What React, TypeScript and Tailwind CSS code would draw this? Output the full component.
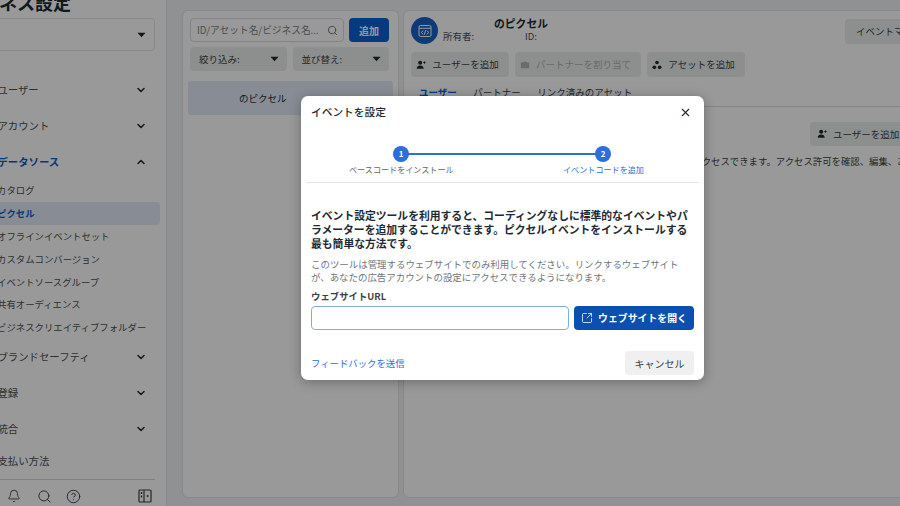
import React from "react";
import { ChevronDown, ChevronUp, Bell, Search, CircleHelp, X, SquareArrowOutUpRight } from "lucide-react";

const font = { fontFamily: '"Noto Sans CJK JP", "Liberation Sans", sans-serif' };

function UserPlus({ className = "" }: { className?: string }) {
  return (
    <svg viewBox="0 0 12 12" className={className} fill="currentColor">
      <circle cx="5" cy="3.2" r="2.4" />
      <path d="M0.8 10.5c0-2.6 1.8-4 4.2-4s4.2 1.4 4.2 4z" />
      <rect x="8.6" y="2.6" width="3" height="1" />
      <rect x="9.6" y="1.6" width="1" height="3" />
    </svg>
  );
}

function Assets({ className = "" }: { className?: string }) {
  return (
    <svg viewBox="0 0 12 12" className={className} fill="currentColor">
      <circle cx="6" cy="3" r="2.2" />
      <circle cx="2.8" cy="8.8" r="2.2" />
      <circle cx="9.2" cy="8.8" r="2.2" />
    </svg>
  );
}

function Brief({ className = "" }: { className?: string }) {
  return (
    <svg viewBox="0 0 12 12" className={className} fill="currentColor">
      <path d="M4 3V2h4v1h3v7H1V3z" />
    </svg>
  );
}

function Caret() {
  return (
    <svg viewBox="0 0 10 6" className="w-[9px] h-[6px] text-[#1c2b33]" fill="currentColor">
      <path d="M0.5 0.5h9L5 5.5z" />
    </svg>
  );
}

function NavRow({ label, open, active }: { label: string; open?: boolean; active?: boolean }) {
  const Icon = open ? ChevronUp : ChevronDown;
  return (
    <div className="h-[36px] -ml-[0.6px] flex items-center justify-between pr-[19px]">
      <span className={active ? "text-[10.4px] font-bold text-[#0a5cd0]" : "text-[10.4px] text-[#4a4f54]"}>{label}</span>
      <Icon className="w-[12px] h-[12px] text-[#1c2b33]" strokeWidth={3} />
    </div>
  );
}

function SubRow({ label, active }: { label: string; active?: boolean }) {
  return (
    <div
      className={
        active
          ? "h-[22.8px] -ml-[1px] flex items-center rounded-r-[4px] mr-[6px] bg-[#e3ecf9] text-[9.4px] font-bold text-[#0a5cd0]"
          : "h-[22.8px] -ml-[1px] flex items-center mr-[6px] text-[9.4px] text-[#4a4f54]"
      }
    >
      {label}
    </div>
  );
}

function Sidebar() {
  return (
    <aside className="w-[167px] shrink-0 h-full bg-white border-r border-[#dfe0e1] overflow-hidden flex flex-col">
      <div className="-mt-[8px] -ml-[37px] text-[18px] leading-[20px] font-bold text-[#1c2b33] whitespace-nowrap">ビジネス設定</div>
      <div className="-ml-[10px] mr-[11px] mt-[6px] h-[33px] border border-[#e4e5e6] rounded-[4px] flex items-center justify-end pr-[8px]">
        <Caret />
      </div>
      <div className="-ml-[2px] mt-[21px] flex-1 flex flex-col">
        <NavRow label="ユーザー" />
        <NavRow label="アカウント" />
        <NavRow label="データソース" open active />
        <div className="-mt-[1px]">
          <SubRow label="カタログ" />
          <SubRow label="ピクセル" active />
          <SubRow label="オフラインイベントセット" />
          <SubRow label="カスタムコンバージョン" />
          <SubRow label="イベントソースグループ" />
          <SubRow label="共有オーディエンス" />
          <SubRow label="ビジネスクリエイティブフォルダー" />
        </div>
        <NavRow label="ブランドセーフティ" />
        <NavRow label="登録" />
        <NavRow label="統合" />
        <div className="h-[28px] -ml-[0.6px] flex items-center text-[10.4px] text-[#4a4f54]">支払い方法</div>
      </div>
      <div className="mr-[11px] h-[27px] border-t border-[#d5d6d7] flex items-center pt-[6px] pl-[7px] pr-[3px] text-[#3a3f44]">
        <Bell className="w-[14px] h-[14px]" strokeWidth={1.5} />
        <Search className="w-[15px] h-[15px] ml-[16px]" strokeWidth={1.5} />
        <CircleHelp className="w-[15px] h-[15px] ml-[14px]" strokeWidth={1.5} />
        <svg viewBox="0 0 14 14" className="w-[14px] h-[14px] ml-auto" fill="none" stroke="currentColor" strokeWidth="1.2">
          <rect x="1" y="1" width="12" height="12" rx="1" />
          <path d="M6 1v12" />
          <rect x="2.8" y="3" width="1.4" height="2" fill="currentColor" stroke="none" />
          <rect x="2.8" y="6.5" width="1.4" height="2" fill="currentColor" stroke="none" />
          <circle cx="9.6" cy="7" r="1" fill="currentColor" stroke="none" />
        </svg>
      </div>
    </aside>
  );
}

function ListPanel() {
  return (
    <section className="w-[217px] shrink-0 bg-white rounded-[6px] border border-[#e2e3e4] px-[7px] pt-[7px]">
      <div className="flex gap-[5px] pr-[2px]">
        <div className="w-[154px] h-[24px] border border-[#dadde1] rounded-[4px] flex items-center justify-between pl-[6px] pr-[5px] text-[9.7px] text-[#7a7f85] overflow-hidden whitespace-nowrap">
          <span>ID/アセット名/ビジネス名...</span>
          <Search className="w-[11px] h-[11px] shrink-0 text-[#6a6f75]" strokeWidth={2} />
        </div>
        <div className="w-[40px] h-[24px] rounded-[4px] bg-[#0b5fd0] text-white text-[10px] font-bold flex items-center justify-center">追加</div>
      </div>
      <div className="flex gap-[6px] mt-[5px] pr-[2px]">
        <div className="w-[97px] h-[24px] rounded-[4px] bg-[#eceded] flex items-center justify-between pl-[9px] pr-[8px] text-[9.5px] text-[#3a3f44]">
          <span>絞り込み:</span>
          <Caret />
        </div>
        <div className="w-[97px] h-[24px] rounded-[4px] bg-[#eceded] flex items-center justify-between pl-[9px] pr-[8px] text-[9.5px] text-[#3a3f44]">
          <span>並び替え:</span>
          <Caret />
        </div>
      </div>
      <div className="-mx-[2px] mt-[10px] h-[34px] rounded-[3px] bg-[#e3ecf9] flex items-center pl-[51px] text-[9.5px] text-[#1c2b33]">
        のピクセル
      </div>
    </section>
  );
}

function GrayBtn({ children, disabled, w }: { children: React.ReactNode; disabled?: boolean; w: string }) {
  return (
    <div
      className={
        (disabled ? "text-[#b0b2b5] " : "text-[#3a3f44] ") +
        w +
        " h-[25px] rounded-[4px] bg-[#eceded] flex items-center justify-center gap-[6px] pr-[5px] text-[9.5px] whitespace-nowrap"
      }
    >
      {children}
    </div>
  );
}

function DetailPanel() {
  return (
    <section className="w-[540px] shrink-0 bg-white rounded-[6px] border border-[#e2e3e4] overflow-hidden flex flex-col">
      <div className="pl-[7px] pt-[6px] h-[41px] flex items-start">
        <div className="w-[27px] h-[27px] rounded-full bg-[#1a62c8] flex items-center justify-center shrink-0">
          <svg viewBox="0 0 14 14" className="w-[14px] h-[14px] text-white" fill="none" stroke="currentColor" strokeWidth="1">
            <rect x="1" y="1.5" width="12" height="11" rx="1.5" />
            <path d="M1 4.3h12M5 6.5 3.5 8.5 5 10.5M9 6.5l1.5 2-1.5 2M7.6 6.3l-1.2 4.4" />
          </svg>
        </div>
        <div className="ml-[5px] -mt-[1px] w-[150px] shrink-0">
          <div className="pl-[51px] text-[10.8px] leading-[14px] font-bold text-[#1c2b33] whitespace-nowrap">のピクセル</div>
          <div className="flex text-[9.5px] leading-[13px] text-[#4a4f54] whitespace-nowrap">
            <span className="w-[82px]">所有者:</span>
            <span>ID:</span>
          </div>
        </div>
        <div className="ml-auto mt-[2px] w-[97px] h-[25px] rounded-l-[4px] bg-[#eceded] flex items-center pl-[11px] text-[9.5px] text-[#3a3f44] whitespace-nowrap overflow-hidden">
          イベントマネージャ
        </div>
      </div>
      <div className="flex gap-[6px] pl-[7px]">
        <GrayBtn w="w-[98px]">
          <UserPlus className="w-[10px] h-[10px] text-[#1c2b33]" />
          ユーザーを追加
        </GrayBtn>
        <GrayBtn w="w-[126px]" disabled>
          <Brief className="w-[10px] h-[10px]" />
          パートナーを割り当て
        </GrayBtn>
        <GrayBtn w="w-[98px]">
          <Assets className="w-[10px] h-[10px] text-[#1c2b33]" />
          アセットを追加
        </GrayBtn>
      </div>
      <div className="flex gap-[16.5px] pl-[15px] mt-[7px] h-[23px] border-b border-[#dcdddf] text-[9.5px] leading-[16px] text-[#3a3f44] whitespace-nowrap">
        <span className="font-bold text-[#0a5cd0]">ユーザー</span>
        <span>パートナー</span>
        <span>リンク済みのアセット</span>
      </div>
      <div className="flex justify-end mt-[15px] pr-[4px]">
        <div className="w-[128px] h-[24px] rounded-[4px] bg-[#eceded] flex items-center pl-[7px] gap-[6px] text-[9.5px] text-[#3a3f44] whitespace-nowrap">
          <UserPlus className="w-[10px] h-[10px] text-[#1c2b33]" />
          ユーザーを追加
        </div>
      </div>
      <div className="mt-[7px] pl-[8px] text-[9.4px] leading-[16px] text-[#3a3f44] whitespace-nowrap">
        現在これらのユーザーはこのビジネスのピクセルとその設定に直接アクセスできます。アクセス許可を確認、編集、あるいは削除できます。
      </div>
    </section>
  );
}

function Modal() {
  return (
    <div className="absolute left-[301px] top-[96px] w-[403px] h-[284px] bg-white rounded-[7px] shadow-[0_2px_12px_rgba(0,0,0,0.3)] flex flex-col">
      <div className="h-[33px] mb-[1px] flex items-center justify-between pl-[10px] pr-[12px] text-[10.7px] font-medium text-[#1c2b33]">
        <span>イベントを設定</span>
        <X className="w-[13px] h-[13px] text-[#1c2b33]" strokeWidth={2} />
      </div>
      <div className="relative mx-[5px] h-[53px] border-b border-[#e3e4e5]">
        <div className="absolute left-[95px] top-[23px] w-[202px] h-[2px] bg-[#2a6fdc]" />
        <div className="absolute left-[87px] top-[16px] w-[16px] h-[16px] rounded-full bg-[#2a6fdc] text-white text-[8px] font-bold flex items-center justify-center">1</div>
        <div className="absolute left-[289px] top-[16px] w-[16px] h-[16px] rounded-full bg-[#2a6fdc] text-white text-[8px] font-bold flex items-center justify-center">2</div>
        <div className="absolute left-[43px] top-[34px] text-[8.1px] leading-[12px] text-[#60656a] whitespace-nowrap">ベースコードをインストール</div>
        <div className="absolute left-[257px] top-[34px] text-[8.1px] leading-[12px] text-[#2a6fdc] whitespace-nowrap">イベントコードを追加</div>
      </div>
      <div className="px-[10px] flex-1 flex flex-col">
        <p className="mt-[25px] text-[10.8px] leading-[14px] font-bold text-[#1c2b33]">
          イベント設定ツールを利用すると、コーディングなしに標準的なイベントやパラメーターを追加することができます。ピクセルイベントをインストールする最も簡単な方法です。
        </p>
        <p className="mt-[8px] text-[9.45px] leading-[13px] text-[#70757a]">
          このツールは管理するウェブサイトでのみ利用してください。リンクするウェブサイトが、あなたの広告アカウントの設定にアクセスできるようになります。
        </p>
        <div className="mt-[5px] text-[9.4px] leading-[14px] font-bold text-[#3a3f44]">ウェブサイトURL</div>
        <div className="mt-[3px] flex gap-[5px]">
          <div className="w-[258px] h-[24px] rounded-[4px] border-[1.5px] border-[#7fabe9] bg-white" />
          <div className="w-[120px] h-[24px] rounded-[4px] bg-[#0b4fb0] text-white flex items-center justify-center gap-[5px] text-[9.9px] font-bold whitespace-nowrap">
            <SquareArrowOutUpRight className="w-[12px] h-[12px]" strokeWidth={1.5} />
            ウェブサイトを開く
          </div>
        </div>
        <div className="mt-[21px] flex items-center justify-between">
          <span className="text-[9.4px] text-[#2a6fdc]">フィードバックを送信</span>
          <div className="w-[69px] h-[24px] rounded-[4px] bg-[#f0f0f0] flex items-center justify-center text-[10px] text-[#3a3f44]">キャンセル</div>
        </div>
      </div>
    </div>
  );
}

export default function App() {
  return (
    <div className="relative w-[900px] h-[506px] overflow-hidden bg-[#f1f2f4] flex" style={font}>
      <Sidebar />
      <main className="flex gap-[4px] pl-[15px] pt-[10px] pb-[8px] flex-1 min-w-0">
        <ListPanel />
        <DetailPanel />
      </main>
      <div className="absolute inset-0 bg-black/40" />
      <Modal />
    </div>
  );
}
